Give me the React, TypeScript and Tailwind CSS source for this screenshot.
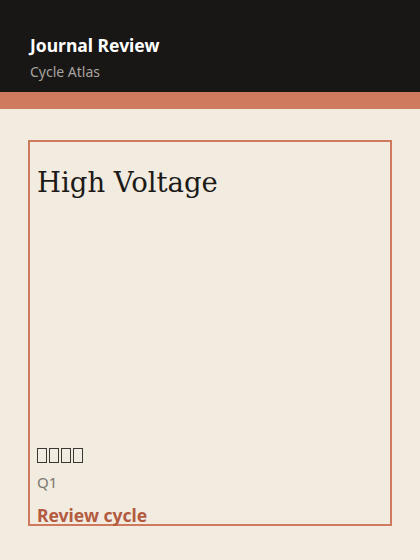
const glyphs = [0, 1, 2, 3];

export default function App() {
  return (
    <div className="min-h-[560px] w-[420px] bg-[#f2ebe0] font-['Noto_Sans',sans-serif]">
      <header className="h-[92px] bg-[#181716] px-[30px] pt-[34px]">
        <h1 className="text-[17.5px] font-bold leading-[22px] text-white">Journal Review</h1>
        <p className="mt-[7px] text-[14px] leading-[18px] text-[#a8a49f]">Cycle Atlas</p>
      </header>
      <div className="h-[17px] bg-[#cf7a5e]" />
      <main className="px-[28px] pt-[31px]">
        <section className="flex h-[386px] flex-col justify-between border-2 border-[#cf7a5e] px-[7px] pt-[22px]">
          <h2 className="font-['DejaVu_Serif',serif] text-[27.5px] leading-[36px] text-[#1c1a17]">High Voltage</h2>
          <div className="flex flex-col">
            <div className="flex h-[15px] gap-[2px]" aria-hidden="true">
              {glyphs.map((g) => (
                <span key={g} className="h-[15px] w-[10px] border-[1.5px] border-[#3a3835]" />
              ))}
            </div>
            <span className="mt-[10px] text-[15px] leading-[18px] text-[#7c7770]">Q1</span>
            <span className="mt-[15px] text-[17.5px] font-bold leading-[18px] text-[#b35a3f]">Review cycle</span>
          </div>
        </section>
      </main>
    </div>
  );
}
